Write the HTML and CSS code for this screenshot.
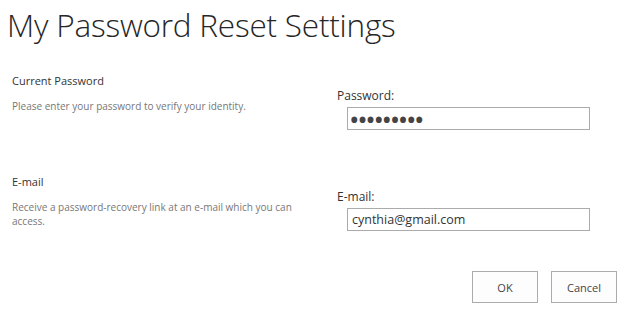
FILE: index.html
```html
<!DOCTYPE html>
<html>
<head>
  <title>My Password Reset Settings</title>
  <link rel="stylesheet" href="styles.css">
</head>
<body>
  <div class="settings">
    <h1>My Password Reset Settings</h1>
    <form id="reset-form">
      <div class="section">
        <div class="section-info">
          <h3>Current Password</h3>
          <p>Please enter your password to verify your identity.</p>
        </div>
        <div class="section-field">
          <label for="password">Password:</label>
          <input type="password" id="password" name="password" value="123456789">
        </div>
      </div>
      <div class="section section-email">
        <div class="section-info">
          <h3>E-mail</h3>
          <p>Receive a password-recovery link at an e-mail which you can access.</p>
        </div>
        <div class="section-field">
          <label for="email">E-mail:</label>
          <input type="text" id="email" name="email" value="cynthia@gmail.com">
        </div>
      </div>
      <div class="buttons">
        <button type="submit">OK</button>
        <button type="button">Cancel</button>
      </div>
    </form>
  </div>
</body>
</html>
```

FILE: styles.css
```css
body {
  font-family: "Open Sans", "Noto Sans", sans-serif;
  margin: 0;
  padding: 0;
  background-color: #fff;
  color: #444;
}

.settings {
  padding: 0 17px 0 12px;
}

h1 {
  font-size: 31.5px;
  font-weight: 300;
  color: #262626;
  margin: 0 0 0 -5px;
  padding-top: 3px;
  line-height: 44px;
  letter-spacing: -0.2px;
}

.section {
  display: grid;
  grid-template-columns: 325px 1fr;
  margin-top: 26px;
}

.section-email {
  margin-top: 44px;
}

.section-info h3 {
  font-size: 11px;
  font-weight: 400;
  color: #333;
  margin: 0;
  line-height: 16px;
}

.section-info p {
  font-size: 10px;
  color: #777;
  margin: 10px 0 0 0;
  line-height: 14px;
  width: 300px;
}

.section-field {
  padding-top: 14px;
}

label {
  display: block;
  font-size: 12px;
  color: #333;
  line-height: 18px;
  margin-bottom: 2px;
}

input[type="password"],
input[type="text"] {
  display: block;
  box-sizing: border-box;
  width: 243px;
  height: 23px;
  margin-left: 10px;
  padding: 0 4px;
  font-family: "Open Sans", "Noto Sans", sans-serif;
  font-size: 12.5px;
  color: #333;
  border: 1px solid #ababab;
  border-radius: 0;
  outline: none;
}

input[type="password"] {
  padding: 0 1px;
  font-size: 28px;
  line-height: 21px;
  letter-spacing: -2.4px;
  color: #444;
}

.buttons {
  display: flex;
  justify-content: flex-end;
  gap: 13px;
  margin-top: 40px;
}

button {
  box-sizing: border-box;
  width: 66px;
  height: 32px;
  font-family: "Open Sans", "Noto Sans", sans-serif;
  font-size: 11px;
  color: #444;
  background-color: #fdfdfd;
  border: 1px solid #ababab;
  border-radius: 0;
  cursor: pointer;
}

button:hover {
  background-color: #f0f0f0;
}
```
